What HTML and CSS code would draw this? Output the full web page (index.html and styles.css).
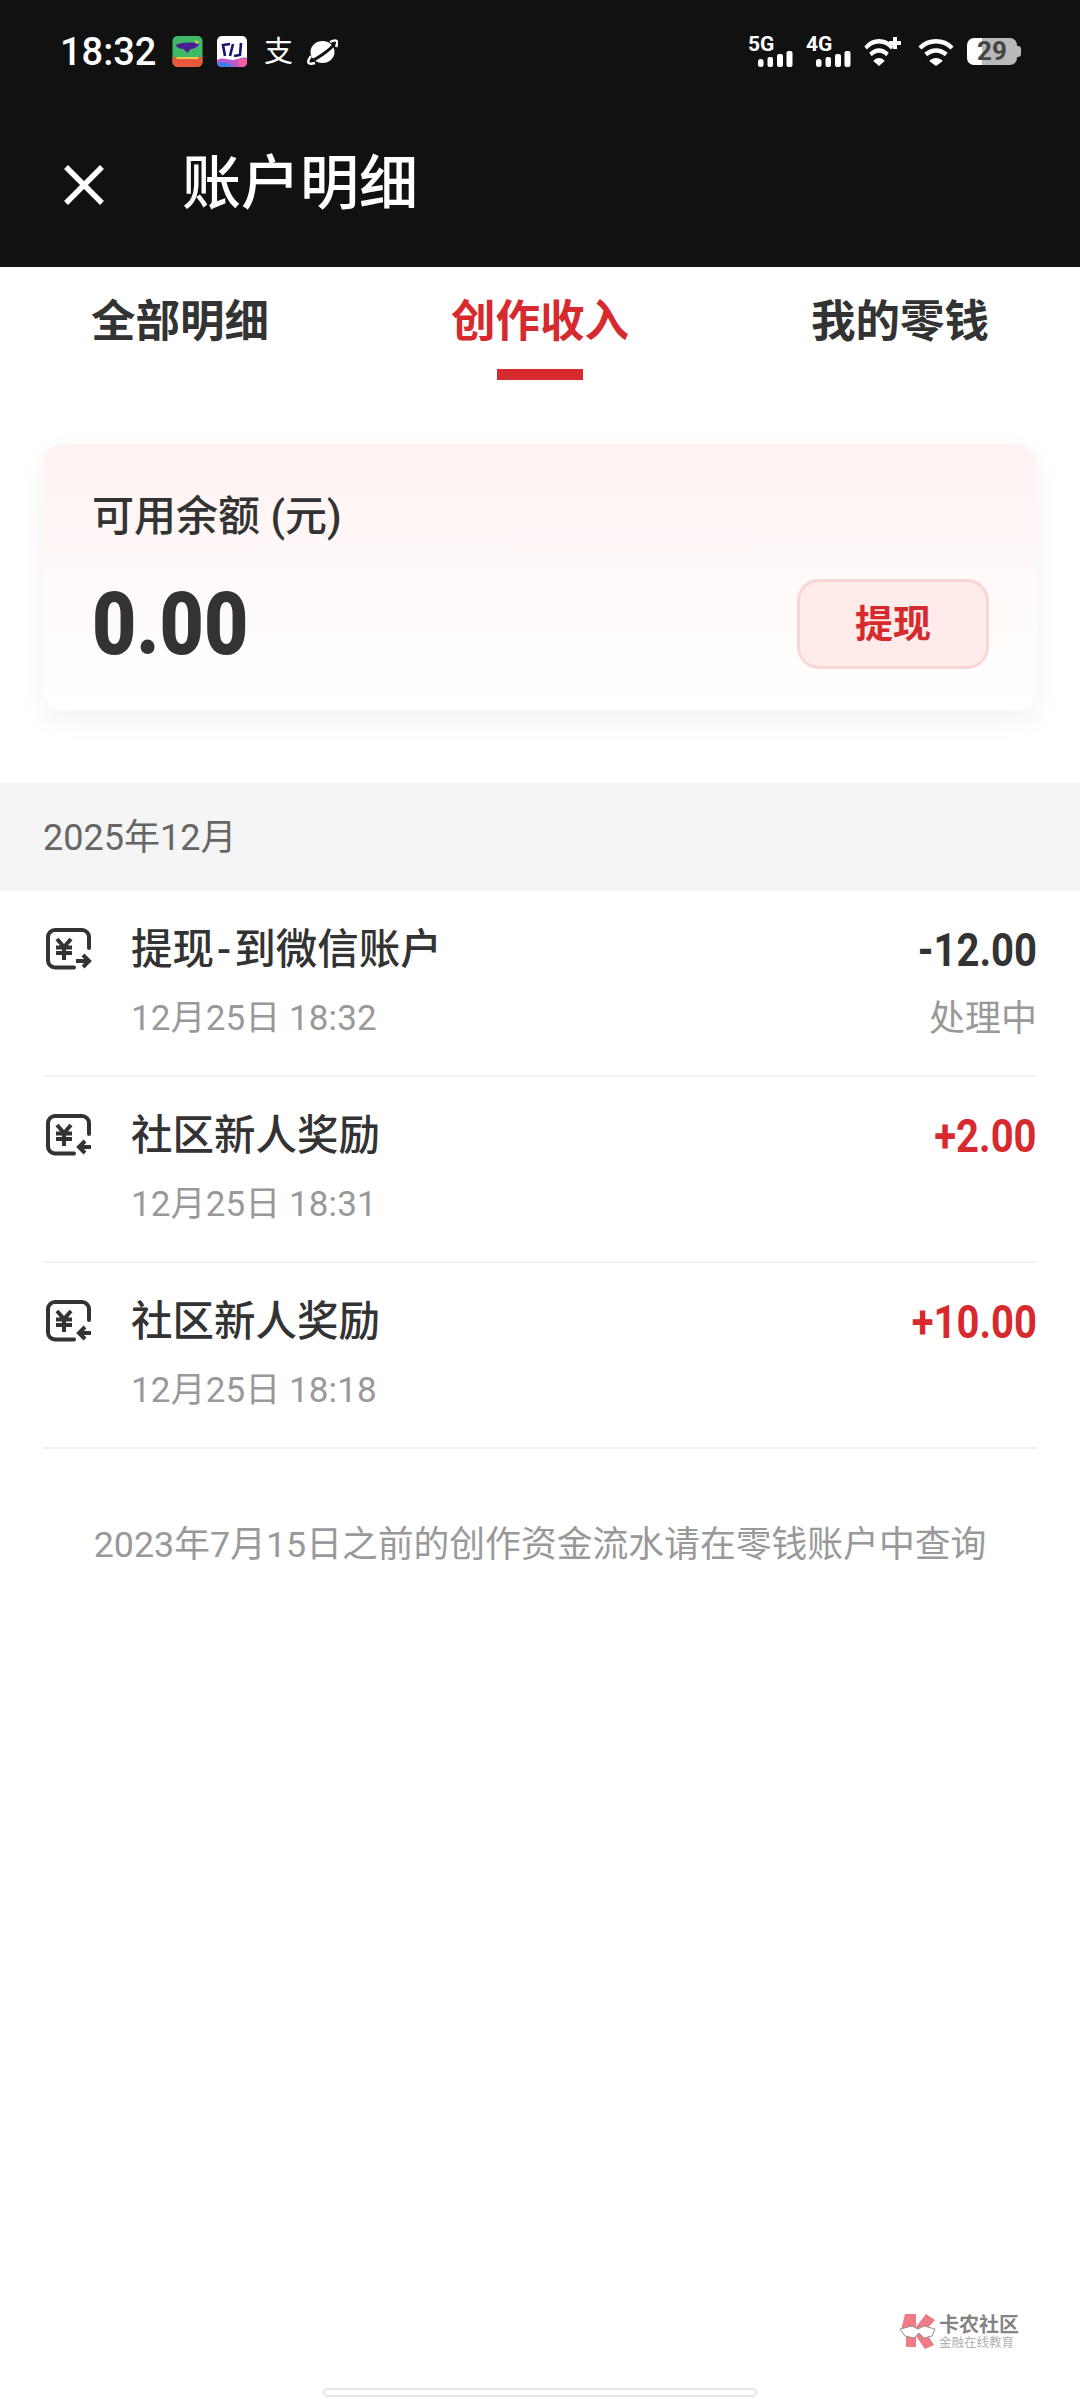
FILE: index.html
```html
<!DOCTYPE html>
<html lang="zh-CN">
<head>
    <meta charset="UTF-8">
    <title>账户明细</title>
    <link rel="stylesheet" href="styles.css">
</head>
<body>

<svg class="defs" width="0" height="0">
    <symbol id="money" viewBox="0 0 46 42">
        <path d="M28 39.500H9a7 7 0 0 1-7-7V9a7 7 0 0 1 7-7h27a7 7 0 0 1 7 7v11" fill="none" stroke="currentColor" stroke-width="4" stroke-linecap="round"/>
        <path d="M11 11l7 8 7-8M10 19.500h16M10 25h16M18 19v13" fill="none" stroke="currentColor" stroke-width="4"/>
    </symbol>
    <symbol id="signal" viewBox="0 0 45 31">
        <rect x="10" y="23" width="5.500" height="8" rx="2.500"/>
        <rect x="19.500" y="21" width="5.500" height="10" rx="2"/>
        <rect x="29" y="18" width="6" height="13" rx="2"/>
        <rect x="38.500" y="15" width="6" height="16" rx="2"/>
    </symbol>
    <symbol id="wifi" viewBox="0 0 37 29" preserveAspectRatio="none">
        <path d="M2 11C11 2 26 2 35 11" fill="none" stroke="currentColor" stroke-width="4.500"/>
        <path d="M8 17.500C14 12 23 12 29 17.500" fill="none" stroke="currentColor" stroke-width="4.500"/>
        <path d="M11.500 24C15 20 22 20 25.500 24L18.500 29z"/>
    </symbol>
</svg>

<div class="page">
    <header class="top">
        <div class="status">
            <span class="time">18:32</span>
            <svg class="app" width="31" height="31" viewBox="0 0 30 31">
                <rect width="30" height="31" rx="5" fill="#3fb968"/>
                <path d="M0 21h30v5a5 5 0 0 1-5 5H5a5 5 0 0 1-5-5z" fill="#e8583a"/>
                <path d="M3 9c8-3 17-3 24-1-3 4-6 5-9 5l-3 4-4-4c-3 0-6-1-8-4z" fill="#4b1e96"/>
                <path d="M4 22h22" stroke="#f2c84b" stroke-width="2"/>
                <path d="M22 4l5 2-3 2z" fill="#e9d24a"/>
            </svg>
            <svg class="app second" width="30" height="31" viewBox="0 0 30 31">
                <rect width="30" height="31" rx="5" fill="#fff"/>
                <path d="M0 24c8-4 12 2 20-1 4-1 7-2 10-1v4a5 5 0 0 1-5 5H5a5 5 0 0 1-5-5z" fill="#b45cd6"/>
                <path d="M0 27c6-2 10 1 14 1v3H5a5 5 0 0 1-5-4z" fill="#3f7de8"/>
                <path d="M20 24c4-1 7-2 10-1v3a5 5 0 0 1-3 5h-6z" fill="#ee5f9b"/>
                <path d="M8 20L6 9l7-1M13 20l3-12M17 20l6-1 1-12" fill="none" stroke="#14146e" stroke-width="2.600"/>
            </svg>
            <span class="alipay">支</span>
            <svg class="app" width="31" height="26" viewBox="0 0 31 26">
                <ellipse cx="15.500" cy="13" rx="12" ry="11" fill="#fff"/>
                <path d="M2 23C8 21 24 11 29 3" fill="none" stroke="#111" stroke-width="3"/>
                <path d="M4 17C-1 24 1 26 8 24M23 3C29 0 32 1 29 8" fill="none" stroke="#fff" stroke-width="2.500"/>
            </svg>
            <div class="status-right">
                <div class="net"><span>5G</span><svg class="bars"><use href="#signal"/></svg></div>
                <div class="net"><span>4G</span><svg class="bars"><use href="#signal"/></svg></div>
                <div class="wifi-plus">
                    <svg class="wifi"><use href="#wifi"/></svg>
                    <span class="plus"></span>
                </div>
                <svg class="wifi"><use href="#wifi"/></svg>
                <div class="battery"><span>29</span></div>
            </div>
        </div>
        <div class="nav">
            <svg class="close" width="42" height="42" viewBox="0 0 42 42">
                <path d="M3 3l36 36M39 3L3 39" stroke="#fff" stroke-width="5.500" fill="none"/>
            </svg>
            <h1>账户明细</h1>
        </div>
    </header>

    <div class="tabs">
        <div class="tab">全部明细</div>
        <div class="tab active">创作收入</div>
        <div class="tab">我的零钱</div>
    </div>

    <div class="card">
        <div class="card-label">可用余额 (元)</div>
        <div class="card-row">
            <div class="balance">0.00</div>
            <div class="withdraw">提现</div>
        </div>
    </div>

    <div class="month">2025年12月</div>

    <ul class="list">
        <li class="item">
            <svg class="item-icon" viewBox="0 0 46 42"><use href="#money"/><path d="M30 33h13M37 27l6 6-6 6" fill="none" stroke="currentColor" stroke-width="4"/></svg>
            <div class="item-main">
                <div class="item-title">提现<span class="dash">-</span>到微信账户</div>
                <div class="item-date">12月25日 18:32</div>
            </div>
            <div class="item-side">
                <div class="amount">-12.00</div>
                <div class="state">处理中</div>
            </div>
        </li>
        <li class="item">
            <svg class="item-icon" viewBox="0 0 46 42"><use href="#money"/><path d="M45 33H33M39 27l-6 6 6 6" fill="none" stroke="currentColor" stroke-width="4"/></svg>
            <div class="item-main">
                <div class="item-title">社区新人奖励</div>
                <div class="item-date">12月25日 18:31</div>
            </div>
            <div class="item-side">
                <div class="amount plus-amount">+2.00</div>
            </div>
        </li>
        <li class="item">
            <svg class="item-icon" viewBox="0 0 46 42"><use href="#money"/><path d="M45 33H33M39 27l-6 6 6 6" fill="none" stroke="currentColor" stroke-width="4"/></svg>
            <div class="item-main">
                <div class="item-title">社区新人奖励</div>
                <div class="item-date">12月25日 18:18</div>
            </div>
            <div class="item-side">
                <div class="amount plus-amount">+10.00</div>
            </div>
        </li>
    </ul>

    <p class="note">2023年7月15日之前的创作资金流水请在零钱账户中查询</p>

    <div class="mark">
        <svg width="36" height="35" viewBox="0 0 36 35">
            <path d="M5 0h11v13L26 0l9 6-10 11 9 14-9 4-9-13v11H6l0-14-5-3z" fill="#ee6d7a"/>
            <path d="M0 15l12-3 6 3 6-3 11 3-3 7-8 2-5-5-5 5-9-2z" fill="#fff" stroke="#888" stroke-width="1"/>
        </svg>
        <div class="mark-text">
            <div class="mark-name">卡农社区</div>
            <div class="mark-sub">金融在线教育</div>
        </div>
    </div>
    <div class="home-bar"></div>
</div>

</body>
</html>
```

FILE: styles.css
```css
*{
    margin: 0;
    padding: 0;
    box-sizing: border-box;
}
body{
    width: 1080px;
    height: 2400px;
    background: #fff;
    font-family: Roboto, "Noto Sans CJK SC", sans-serif;
    color: #333;
    overflow: hidden;
}
.defs{
    position: absolute;
}
.page{
    position: relative;
    height: 2400px;
}
.top{
    height: 267px;
    background: #111;
    color: #fff;
}
.status{
    height: 100px;
    padding: 3px 63px 0 60px;
    display: flex;
    align-items: center;
}
.time{
    font-size: 38px;
    font-weight: 500;
    width: 112px;
}
.app{
    margin-right: 14px;
    flex: none;
}
.app.second{
    margin-right: 17px;
}
.alipay{
    font-size: 29px;
    width: 29px;
    margin-right: 14px;
    line-height: 30px;
}
.status-right{
    margin-left: auto;
    display: flex;
    align-items: center;
    gap: 13px;
}
.net{
    width: 45px;
    height: 31px;
    position: relative;
}
.net span{
    position: absolute;
    left: 0;
    top: -4px;
    font-size: 21px;
    font-weight: 700;
    line-height: 24px;
}
.bars{
    width: 45px;
    height: 31px;
    display: block;
    fill: #fff;
}
.wifi{
    width: 36px;
    height: 29px;
    display: block;
    fill: #fff;
    color: #fff;
}
.wifi-plus{
    width: 37px;
    position: relative;
    margin-right: 4px;
}
.wifi-plus .wifi{
    width: 30px;
}
.plus{
    position: absolute;
    right: 0;
    top: 0;
    width: 12px;
    height: 12px;
    background: linear-gradient(#fff, #fff) center / 12px 4px no-repeat, linear-gradient(#fff, #fff) center / 4px 12px no-repeat;
}
.battery{
    width: 50px;
    height: 27px;
    border-radius: 7px;
    background: linear-gradient(90deg, #fff 30%, #b9b9b9 30%);
    color: #444;
    font-size: 26px;
    font-weight: 700;
    line-height: 27px;
    text-align: center;
    position: relative;
}
.battery:after{
    content: '';
    position: absolute;
    right: -4px;
    top: 8px;
    width: 4px;
    height: 11px;
    border-radius: 0 3px 3px 0;
    background: #b9b9b9;
}
.nav{
    height: 167px;
    padding: 0 0 0 63px;
    display: flex;
    align-items: center;
}
.close{
    margin-right: 77px;
    position: relative;
    top: 1px;
}
.nav h1{
    font-size: 59px;
    font-weight: 500;
    line-height: 74px;
}
.tabs{
    height: 114px;
    padding: 0 60px;
    display: flex;
    justify-content: space-between;
}
.tab{
    width: 240px;
    text-align: center;
    font-size: 44.500px;
    font-weight: 700;
    line-height: 110px;
    color: #333;
    position: relative;
}
.tab.active{
    color: #d62a2e;
}
.tab.active:after{
    content: '';
    position: absolute;
    left: 77px;
    bottom: 1px;
    width: 86px;
    height: 11px;
    background: #d62a2e;
}
.card{
    margin: 63px 43px 0;
    height: 266px;
    padding: 44px 48px 0 49px;
    border-radius: 20px;
    background: linear-gradient(#fff3f2, #fff);
    box-shadow: 0 10px 30px rgba(0,0,0,.05);
}
.card-label{
    font-size: 42px;
    font-weight: 500;
    line-height: 58px;
}
.card-row{
    margin-top: 33px;
    display: flex;
    justify-content: space-between;
    align-items: center;
}
.balance{
    font-size: 88px;
    font-weight: 900;
    line-height: 84px;
    transform: scaleX(.87);
    transform-origin: left center;
}
.withdraw{
    width: 192px;
    height: 90px;
    border: 3px solid #f8d6d4;
    border-radius: 22px;
    background: #ffecea;
    color: #d62a2e;
    font-size: 38px;
    font-weight: 700;
    line-height: 84px;
    text-align: center;
}
.month{
    margin-top: 73px;
    height: 108px;
    padding-left: 43px;
    background: #f5f5f5;
    color: #666;
    font-size: 36px;
    line-height: 110px;
}
.list{
    list-style: none;
    padding: 0 43px;
}
.item{
    height: 186px;
    padding-top: 31px;
    border-bottom: 2px solid #f2f2f2;
    display: flex;
}
.item-icon{
    width: 46px;
    height: 42px;
    margin: 6px 39px 0 3px;
    color: #333;
    flex: none;
}
.item-main{
    flex: 1;
}
.item-title{
    font-size: 41.500px;
    font-weight: 500;
    line-height: 56px;
    color: #333;
}
.dash{
    margin: 0 3px;
}
.item-date{
    margin-top: 16px;
    font-size: 35px;
    line-height: 50px;
    color: #999;
    letter-spacing: .1px;
}
.item-side{
    text-align: right;
}
.amount{
    font-size: 46px;
    font-weight: 700;
    line-height: 56px;
    transform: scaleX(.87);
    transform-origin: right center;
}
.plus-amount{
    color: #d62a2e;
}
.state{
    margin-top: 16px;
    font-size: 36px;
    line-height: 50px;
    color: #999;
}
.note{
    margin-top: 71px;
    text-align: center;
    font-size: 35.800px;
    line-height: 50px;
    color: #999;
}
.mark{
    position: absolute;
    left: 900px;
    top: 2314px;
    display: flex;
    gap: 3px;
    opacity: .9;
}
.mark-name{
    font-size: 20px;
    font-weight: 700;
    line-height: 22px;
    color: #777;
}
.mark-sub{
    font-size: 12.500px;
    line-height: 14px;
    color: #aaa;
}
.home-bar{
    position: absolute;
    left: 323px;
    top: 2388px;
    width: 434px;
    height: 9px;
    border: 2px solid #e6e6e6;
    border-radius: 5px;
    background: #fff;
}
```
